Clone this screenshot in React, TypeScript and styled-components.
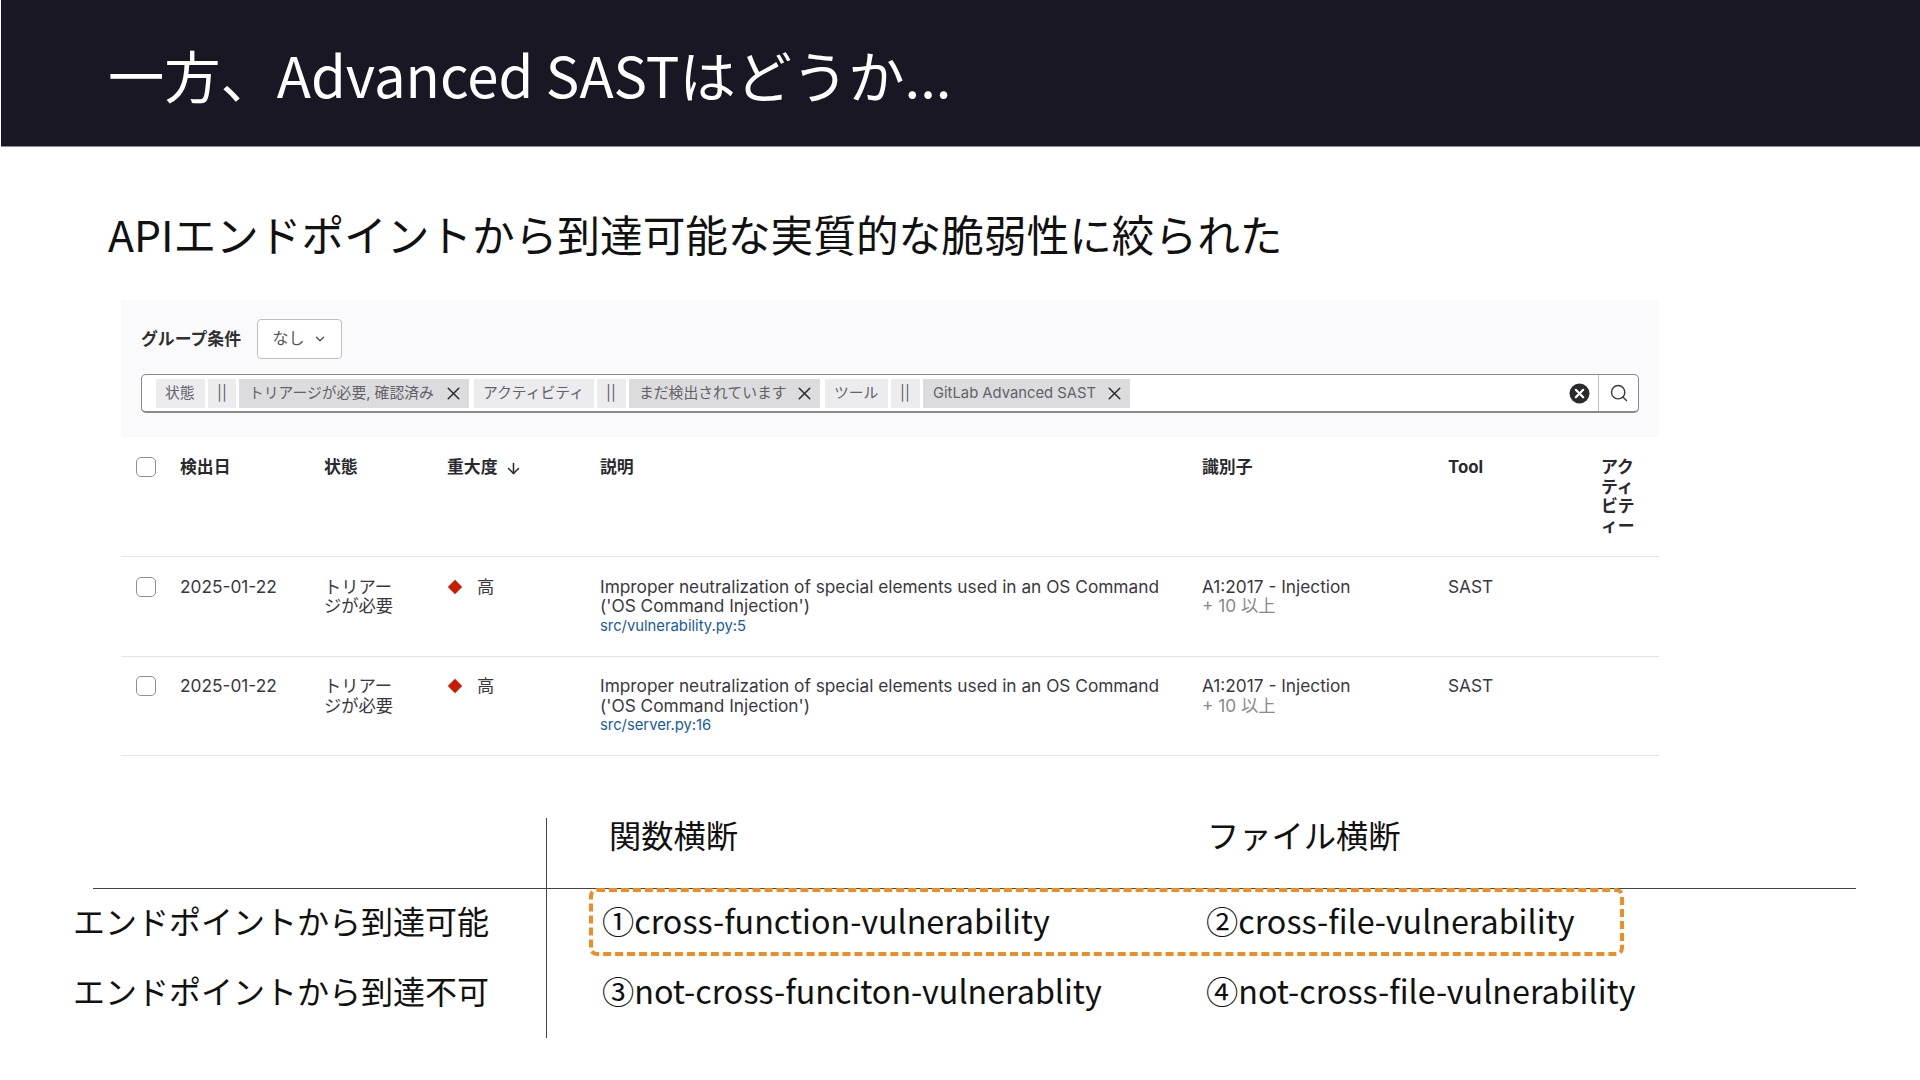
import { ArrowDown, ChevronDown, Search, X } from 'lucide-react';
import styled, { createGlobalStyle } from 'styled-components';

const GlobalStyle = createGlobalStyle`
    html, body {
        margin: 0;
        padding: 0;
        background: #ffffff;
    }
`;

const Slide = styled.div`
    width: 1920px;
    height: 1080px;
    overflow: hidden;
    background: #ffffff;
    color: #111111;
    font-family: "Noto Sans CJK JP", "Noto Sans", sans-serif;
`;

const Header = styled.header`
    height: 147px;
    display: flex;
    align-items: center;
    box-sizing: border-box;
    margin-left: 1px;
    padding-left: 107px;
    background: #1a1725;
    color: #ffffff;
    font-size: 56.25px;
    border-bottom: 1px solid #8c8b92;
`;

const Subtitle = styled.h2`
    margin: 57px 0 36px 108px;
    height: 60px;
    font-size: 42.67px;
    line-height: 60px;
    font-weight: 400;
`;

// GitLab screenshot part
const Report = styled.div`
    width: 1538px;
    margin-left: 121px;
    font-family: Inter, "Noto Sans CJK JP", sans-serif;
    font-size: 17.28px;
    line-height: 19.6px;
    color: #3a383f;
`;

const FilterPanel = styled.div`
    height: 137px;
    box-sizing: border-box;
    padding: 19px 20px 0;
    background: #fafafc;
`;

const GroupRow = styled.div`
    display: flex;
    align-items: center;
    gap: 16px;
    height: 40px;
    margin-bottom: 15px;
`;

const GroupLabel = styled.span`
    padding-top: 1px;
    font-size: 16.85px;
    font-weight: 700;
    color: #303030;
`;

const GroupSelect = styled.div`
    width: 85px;
    height: 40px;
    box-sizing: border-box;
    display: flex;
    align-items: center;
    justify-content: center;
    gap: 8px;
    background: #ffffff;
    border: 1px solid #bfbfc3;
    border-radius: 4px;
    font-size: 16px;
    color: #55545b;
`;

const SearchBar = styled.div`
    width: 1498px;
    height: 39px;
    box-sizing: border-box;
    display: flex;
    align-items: center;
    padding-left: 14px;
    background: #ffffff;
    border: 1px solid #89888d;
    border-bottom-width: 2px;
    border-radius: 5px;
`;

const Token = styled.span<{ $value?: boolean; $width: number }>`
    width: ${(p) => p.$width}px;
    height: 29px;
    flex: none;
    box-sizing: border-box;
    display: flex;
    align-items: center;
    justify-content: space-between;
    margin-right: ${(p) => (p.$value ? 5 : 3)}px;
    padding: 1px 5px 0 ${(p) => (p.$value ? 10 : 9)}px;
    background: ${(p) => (p.$value ? '#dcdcde' : '#ececef')};
    color: #626168;
    font-size: 14.8px;
    white-space: nowrap;
`;

const TokenX = styled(X)`
    flex: none;
    color: #2f2e35;
`;

const ClearIcon = styled.svg`
    width: 21px;
    height: 21px;
    flex: none;
    margin-left: auto;
    margin-right: 8px;
`;

const SearchButton = styled.div`
    width: 39px;
    height: 100%;
    display: flex;
    align-items: center;
    justify-content: center;
    border-left: 1px solid #bfbfc3;
    color: #3a383f;
`;

const Row = styled.div<{ $head?: boolean }>`
    display: grid;
    grid-template-columns: 59px 144px 123px 153px 602px 246px 153px 58px;
    height: ${(p) => (p.$head ? 120 : 99.5)}px;
    box-sizing: border-box;
    padding-top: ${(p) => (p.$head ? 21 : 19.5)}px;
    border-bottom: 1.5px solid #e4e4e7;
    font-weight: ${(p) => (p.$head ? 700 : 400)};
    font-size: ${(p) => (p.$head ? 16.85 : 17.28)}px;
    color: ${(p) => (p.$head ? '#2a2a2e' : '#3a383f')};
`;

const CheckCell = styled.div<{ $head?: boolean }>`
    padding-left: 15px;
    margin-top: ${(p) => (p.$head ? -1 : 0)}px;
`;

const CheckBox = styled.div`
    width: 20px;
    height: 20px;
    box-sizing: border-box;
    background: #ffffff;
    border: 1.5px solid #8f8e94;
    border-radius: 5px;
`;

const Status = styled.div`
    max-width: 72px;
`;

const SeverityHead = styled.div`
    display: flex;
    align-items: center;
    gap: 7px;
    height: 20px;
`;

const Severity = styled.div`
    display: flex;
    align-items: flex-start;
    gap: 14px;
`;

const Diamond = styled.svg`
    width: 16px;
    height: 16px;
    margin-top: 2px;
`;

const Path = styled.div`
    font-size: 14.8px;
    line-height: 20.4px;
    color: #17599f;
`;

const Muted = styled.div`
    color: #89888d;
`;

// matrix at the bottom
const Matrix = styled.div`
    margin: 62px 0 0 93px;
    width: 1763px;
`;

const MatrixRow = styled.div<{ $height: number; $line?: boolean }>`
    display: grid;
    grid-template-columns: 454px 1fr;
    height: ${(p) => p.$height}px;
    box-sizing: border-box;
    font-size: 32.25px;
    border-bottom: ${(p) => (p.$line ? '1.5px solid #444444' : 'none')};
`;

const LabelCell = styled.div<{ $lift?: number }>`
    display: flex;
    align-items: center;
    box-sizing: border-box;
    margin-left: -20px;
    padding-bottom: ${(p) => p.$lift ?? 0}px;
    border-right: 1.5px solid #444444;
    font-size: 32px;
    white-space: nowrap;
`;

const HeadCells = styled.div`
    display: grid;
    grid-template-columns: 598px 1fr;
    align-items: start;
    padding-left: 62px;
    line-height: 33px;
`;

const Cells = styled.div`
    display: grid;
    grid-template-columns: 604px 1fr;
    align-items: center;
    padding: 0 0 14px 55px;
    white-space: nowrap;
`;

const HighlightBox = styled.div`
    display: grid;
    grid-template-columns: 604px 1fr;
    align-items: center;
    width: 1035px;
    height: 68px;
    box-sizing: border-box;
    margin: -1px 0 0 42px;
    padding: 0 0 4px 9px;
    border: 4px dashed #f08c24;
    border-radius: 8px;
    white-space: nowrap;
`;

const tableRows = ['src/vulnerability.py:5', 'src/server.py:16'];

const App = () => {
    return (
        <>
            <GlobalStyle />
            <Slide>
                <Header>一方、Advanced SASTはどうか...</Header>
                <Subtitle>APIエンドポイントから到達可能な実質的な脆弱性に絞られた</Subtitle>

                <Report>
                    <FilterPanel>
                        <GroupRow>
                            <GroupLabel>グループ条件</GroupLabel>
                            <GroupSelect>
                                なし
                                <ChevronDown size={14} strokeWidth={2.5} />
                            </GroupSelect>
                        </GroupRow>
                        <SearchBar>
                            <Token $width={49}>状態</Token>
                            <Token $width={28}>||</Token>
                            <Token $value $width={230}>
                                トリアージが必要, 確認済み
                                <TokenX size={21} strokeWidth={1.8} />
                            </Token>
                            <Token $width={120}>アクティビティ</Token>
                            <Token $width={29}>||</Token>
                            <Token $value $width={191}>
                                まだ検出されています
                                <TokenX size={21} strokeWidth={1.8} />
                            </Token>
                            <Token $width={63}>ツール</Token>
                            <Token $width={29}>||</Token>
                            <Token $value $width={207}>
                                GitLab Advanced SAST
                                <TokenX size={21} strokeWidth={1.8} />
                            </Token>
                            <ClearIcon viewBox="0 0 21 21">
                                <circle cx="10.5" cy="10.5" r="10" fill="#2b2a30" />
                                <path d="M6.8 6.8l7.4 7.4M14.2 6.8l-7.4 7.4" stroke="#ffffff" strokeWidth="2.2" strokeLinecap="round" />
                            </ClearIcon>
                            <SearchButton>
                                <Search size={20} strokeWidth={1.7} />
                            </SearchButton>
                        </SearchBar>
                    </FilterPanel>

                    <Row $head>
                        <CheckCell $head><CheckBox /></CheckCell>
                        <div>検出日</div>
                        <div>状態</div>
                        <SeverityHead>
                            重大度
                            <ArrowDown size={17} strokeWidth={2.2} />
                        </SeverityHead>
                        <div>説明</div>
                        <div>識別子</div>
                        <div>Tool</div>
                        <div>アク<br />ティ<br />ビテ<br />ィー</div>
                    </Row>

                    {tableRows.map((path) => (
                        <Row key={path}>
                            <CheckCell><CheckBox /></CheckCell>
                            <div>2025-01-22</div>
                            <Status>トリアージが必要</Status>
                            <Severity>
                                <Diamond viewBox="0 0 16 16">
                                    <path d="M8 .8L15.2 8 8 15.2.8 8z" fill="#c91c00" />
                                </Diamond>
                                高
                            </Severity>
                            <div>
                                Improper neutralization of special elements used in an OS Command<br />
                                ('OS Command Injection')
                                <Path>{path}</Path>
                            </div>
                            <div>
                                A1:2017 - Injection
                                <Muted>+ 10 以上</Muted>
                            </div>
                            <div>SAST</div>
                            <div />
                        </Row>
                    ))}
                </Report>

                <Matrix>
                    <MatrixRow $height={71} $line>
                        <LabelCell />
                        <HeadCells>
                            <div>関数横断</div>
                            <div>ファイル横断</div>
                        </HeadCells>
                    </MatrixRow>
                    <MatrixRow $height={67}>
                        <LabelCell $lift={6}>エンドポイントから到達可能</LabelCell>
                        <div>
                            <HighlightBox>
                                <div>①cross-function-vulnerability</div>
                                <div>②cross-file-vulnerability</div>
                            </HighlightBox>
                        </div>
                    </MatrixRow>
                    <MatrixRow $height={82}>
                        <LabelCell $lift={14}>エンドポイントから到達不可</LabelCell>
                        <Cells>
                            <div>③not-cross-funciton-vulnerablity</div>
                            <div>④not-cross-file-vulnerability</div>
                        </Cells>
                    </MatrixRow>
                </Matrix>
            </Slide>
        </>
    );
};

export default App;
